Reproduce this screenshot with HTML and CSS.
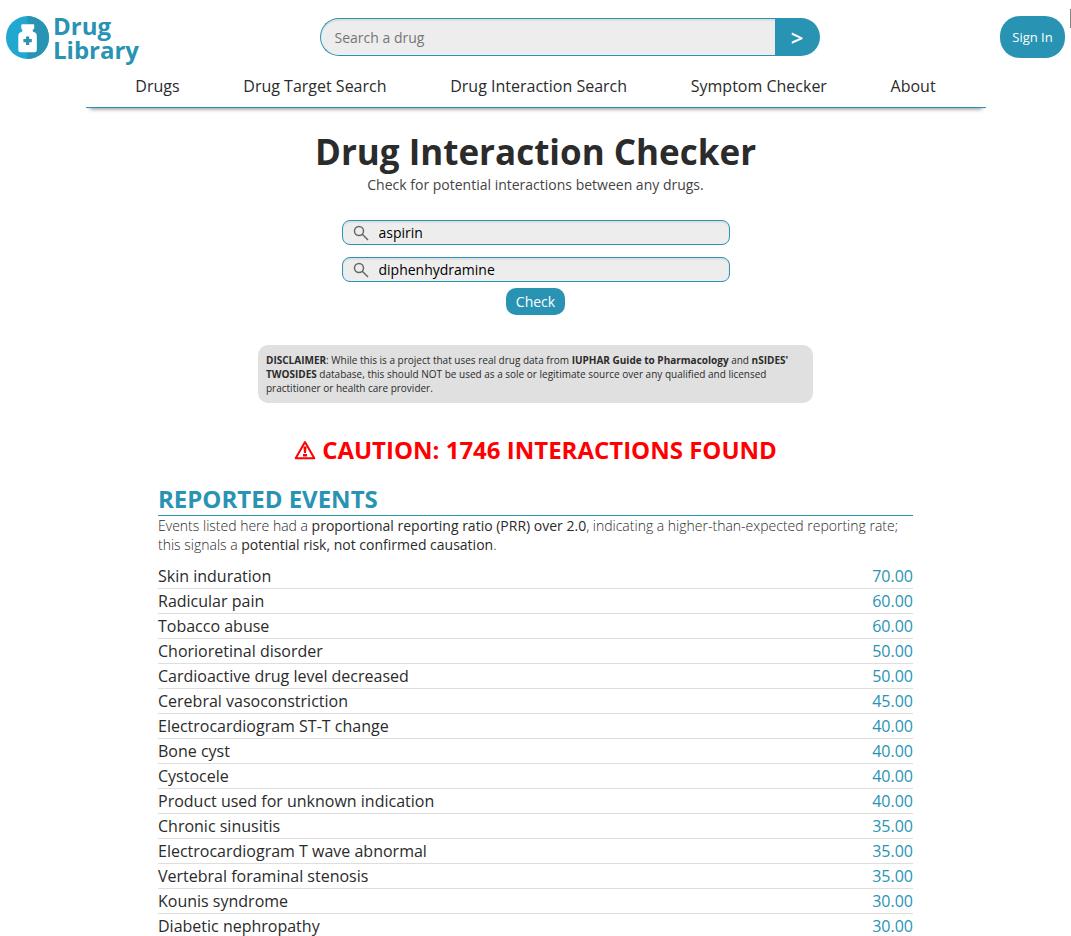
FILE: index.html
```html
<!DOCTYPE html>
<html lang="en">
<head>
<meta charset="utf-8">
<meta name="viewport" content="width=device-width, initial-scale=1">
<title>Drug Interaction Checker</title>
<link rel="stylesheet" href="styles.css">
</head>
<body>
<header class="header">
  <div class="topbar">
    <a class="logo" href="#">
      <svg class="logo-icon" viewBox="0 0 43 43" aria-hidden="true">
        <circle cx="21.5" cy="21.5" r="21.5" fill="#22a7d0"/>
        <path d="M21.500 0a21.500 21.500 0 0 1 0 43z" fill="#2993b3"/>
        <path d="M16 8.200h11.500q.7 0 .7.700v3.600q0 .7-.7.700h-.7v2.400q4 1 4 4.400v14q0 2.200-2.200 2.200H14.500q-2.200 0-2.200-2.200V20q0-3.400 4-4.400v-2.400H16q-.7 0-.7-.7V8.900q0-.7.7-.7z" fill="#fff"/>
        <path d="M20 20.500h3.200v2.600h2.600v3.200h-2.600v2.600H20v-2.600h-2.600v-3.200H20z" fill="#2993b3"/>
      </svg>
      <span class="logo-text">Drug<br>Library</span>
    </a>
    <form class="search">
      <input class="search-input" type="text" placeholder="Search a drug" aria-label="Search a drug">
      <button class="search-button" type="button" aria-label="Search">&gt;</button>
    </form>
    <button class="sign-in" type="button">Sign In</button>
  </div>
  <nav class="nav">
    <a href="#">Drugs</a>
    <a href="#">Drug Target Search</a>
    <a href="#">Drug Interaction Search</a>
    <a href="#">Symptom Checker</a>
    <a href="#">About</a>
  </nav>
  <span class="edge-tab"></span>
</header>
<main class="main">
  <h1 class="title">Drug Interaction Checker</h1>
  <p class="subtitle">Check for potential interactions between any drugs.</p>
  <form class="checker">
    <div class="field">
      <svg class="field-icon" viewBox="0 0 16 16" aria-hidden="true"><circle cx="6" cy="6" r="4.500"/><path d="M9.300 9.300L15 15"/></svg>
      <input class="field-input" type="text" value="aspirin" aria-label="First drug">
    </div>
    <div class="field">
      <svg class="field-icon" viewBox="0 0 16 16" aria-hidden="true"><circle cx="6" cy="6" r="4.500"/><path d="M9.300 9.300L15 15"/></svg>
      <input class="field-input" type="text" value="diphenhydramine" aria-label="Second drug">
    </div>
    <button class="check-button" type="button">Check</button>
  </form>
  <p class="disclaimer"><b>DISCLAIMER</b>: While this is a project that uses real drug data from <b>IUPHAR Guide to Pharmacology</b> and <b>nSIDES' TWOSIDES</b> database, this should NOT be used as a sole or legitimate source over any qualified and licensed practitioner or health care provider.</p>
  <h2 class="caution">
    <svg class="caution-icon" viewBox="0 0 22 20" aria-hidden="true"><path d="M11 2L20.300 18.300H1.700z" fill="none" stroke="#f00" stroke-width="2" stroke-linejoin="round"/><path d="M9.400 6.500h3.200l-.6 6.500h-2zM9 14h4v2.600H9z" fill="#f00"/></svg>
    <span>CAUTION: 1746 INTERACTIONS FOUND</span>
  </h2>
  <section class="events">
    <h2 class="events-title">REPORTED EVENTS</h2>
    <p class="events-note">Events listed here had a <span class="strong">proportional reporting ratio (PRR) over 2.0</span>, indicating a higher-than-expected reporting rate; this signals a <span class="strong">potential risk, not confirmed causation</span>.</p>
    <table class="events-table">
      <tbody>
        <tr><td>Skin induration</td><td>70.00</td></tr>
        <tr><td>Radicular pain</td><td>60.00</td></tr>
        <tr><td>Tobacco abuse</td><td>60.00</td></tr>
        <tr><td>Chorioretinal disorder</td><td>50.00</td></tr>
        <tr><td>Cardioactive drug level decreased</td><td>50.00</td></tr>
        <tr><td>Cerebral vasoconstriction</td><td>45.00</td></tr>
        <tr><td>Electrocardiogram ST-T change</td><td>40.00</td></tr>
        <tr><td>Bone cyst</td><td>40.00</td></tr>
        <tr><td>Cystocele</td><td>40.00</td></tr>
        <tr><td>Product used for unknown indication</td><td>40.00</td></tr>
        <tr><td>Chronic sinusitis</td><td>35.00</td></tr>
        <tr><td>Electrocardiogram T wave abnormal</td><td>35.00</td></tr>
        <tr><td>Vertebral foraminal stenosis</td><td>35.00</td></tr>
        <tr><td>Kounis syndrome</td><td>30.00</td></tr>
        <tr><td>Diabetic nephropathy</td><td>30.00</td></tr>
      </tbody>
    </table>
  </section>
</main>
</body>
</html>
```
FILE: styles.css
```css
* {
  box-sizing: border-box;
}

body {
  margin: 0;
  background: #fff;
  color: #2b2b2b;
  font-family: "Open Sans", "Noto Sans", sans-serif;
  font-size: 16px;
}

h1, h2, p {
  margin: 0;
}

button, input {
  font-family: inherit;
}

button {
  border: 0;
  padding: 0;
  background: #2993b3;
  color: #fff;
}

a {
  color: inherit;
  text-decoration: none;
}

.header {
  position: relative;
  padding-top: 10px;
}

.topbar {
  display: flex;
  justify-content: space-between;
  align-items: center;
  height: 54px;
  padding: 0 6px;
}

.logo {
  display: flex;
  align-items: center;
  gap: 4px;
  color: #2993b3;
}

.logo-icon {
  width: 43px;
  height: 43px;
}

.logo-text {
  padding-top: 1px;
  font-size: 24px;
  font-weight: 700;
  line-height: 24px;
}

.search {
  display: flex;
  flex: 0 1 500px;
  height: 38px;
}

.search-input {
  flex: 1;
  min-width: 0;
  padding: 0 14px;
  border: 1px solid #2993b3;
  border-right: 0;
  border-radius: 19px 0 0 19px;
  background: #ededed;
  box-shadow: inset 0 2px 1px #dedede;
  font-size: 14px;
}

.search-input::placeholder {
  color: #757575;
}

.search-button {
  width: 45px;
  border-radius: 0 19px 19px 0;
  font-size: 22px;
  font-weight: 600;
}

.sign-in {
  width: 65px;
  height: 42px;
  border-radius: 20px;
  font-size: 13px;
}

.nav {
  display: flex;
  justify-content: space-around;
  max-width: 900px;
  height: 44px;
  margin: 0 auto;
  padding: 10px 18px 0;
  border-bottom: 1px solid #2993b3;
  box-shadow: 0 5px 4px -4px #888;
  font-weight: 500;
  line-height: 24px;
}

.edge-tab {
  position: absolute;
  top: 9px;
  right: 0;
  width: 1px;
  height: 19px;
  background: #858585;
}

.main {
  display: flex;
  flex-direction: column;
  align-items: center;
  padding: 20px 16px 0;
}

.title {
  font-size: 35px;
  font-weight: 700;
  line-height: 48px;
}

.subtitle {
  color: #444;
  font-size: 14px;
  line-height: 18px;
}

.checker {
  display: flex;
  flex-direction: column;
  align-items: center;
  width: 100%;
  max-width: 388px;
  margin-top: 26px;
}

.field {
  display: flex;
  align-items: center;
  gap: 10px;
  width: 100%;
  height: 25px;
  margin-bottom: 12px;
  padding: 0 10px;
  border: 1px solid #2993b3;
  border-radius: 8px;
  background: #ededed;
  box-shadow: inset 0 2px 1px #dedede;
}

.field-icon {
  width: 16px;
  height: 16px;
  fill: none;
  stroke: #666;
  stroke-width: 1.500;
}

.field-input {
  flex: 1;
  min-width: 0;
  padding: 0;
  border: 0;
  background: transparent;
  color: #000;
  font-size: 14px;
}

.field:nth-child(2) {
  margin-bottom: 6px;
}

.check-button {
  height: 27px;
  padding: 0 10px;
  border-radius: 10px;
  font-size: 14px;
}

.disclaimer {
  width: 100%;
  max-width: 555px;
  margin-top: 30px;
  padding: 8px;
  border-radius: 10px;
  background: #e0e0e0;
  font-size: 10px;
  line-height: 14px;
}

.caution {
  display: flex;
  align-items: center;
  gap: 6px;
  margin-top: 30px;
  color: #f00;
  font-size: 24px;
  font-weight: 700;
  line-height: 33px;
}

.caution-icon {
  width: 22px;
  height: 20px;
}

.events {
  width: 100%;
  max-width: 755px;
  margin-top: 17px;
}

.events-title {
  border-bottom: 1px solid #2993b3;
  color: #2993b3;
  font-size: 24px;
  font-weight: 700;
  line-height: 32px;
}

.events-note {
  margin-bottom: 10px;
  font-size: 14px;
  font-weight: 300;
  line-height: 19px;
}

.strong {
  font-weight: 400;
}

.events-table {
  width: 100%;
  border-spacing: 0;
  line-height: 24px;
}

.events-table td {
  padding: 0;
  border-bottom: 1px solid #dedede;
}

.events-table td:last-child {
  color: #2993b3;
  text-align: right;
}
```
